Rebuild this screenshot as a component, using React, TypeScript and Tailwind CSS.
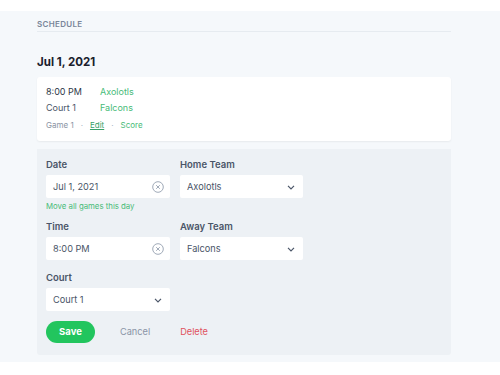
import React from "react";

function ClearIcon() {
  return (
    <svg width="12" height="12" viewBox="0 0 12 12" fill="none" stroke="#a0aab8" strokeWidth="1">
      <circle cx="6" cy="6" r="5.3" />
      <path d="M4.2 4.2l3.6 3.6M7.8 4.2l-3.6 3.6" />
    </svg>
  );
}

function Chevron() {
  return (
    <svg width="10" height="10" viewBox="0 0 10 10" fill="none" stroke="#4a5568" strokeWidth="1.2">
      <path d="M2 3.8l3 3 3-3" />
    </svg>
  );
}

function Field({ label, children }: { label: string; children: React.ReactNode }) {
  return (
    <div className="flex flex-col">
      <div className="text-[9.5px] font-semibold text-[#4a5568] leading-[12px] mb-[4px]">{label}</div>
      {children}
    </div>
  );
}

function TextBox({ value }: { value: string }) {
  return (
    <div className="w-[124px] h-[23px] bg-white rounded-[2px] flex items-center justify-between pl-[7px] pr-[6px] text-[9.2px] text-[#4a5568]">
      <span>{value}</span>
      <ClearIcon />
    </div>
  );
}

function SelectBox({ value, w = "w-[123px]" }: { value: string; w?: string }) {
  return (
    <div className={`${w} h-[23px] bg-white rounded-[2px] flex items-center justify-between pl-[7px] pr-[7px] text-[9.2px] text-[#4a5568]`}>
      <span>{value}</span>
      <Chevron />
    </div>
  );
}

export default function App() {
  return (
    <div className="w-[500px] h-[375px] bg-white font-['Inter',sans-serif] pt-[11px]">
      <div className="bg-[#f5f8fb] h-[351px] px-[37px] pt-[7px]">
        <div className="w-[414px]">
          <div className="text-[8px] font-semibold tracking-[0.04em] text-[#7a8699] uppercase leading-[12px] pb-[1px] border-b border-[#e6ebf0]">
            Schedule
          </div>
          <h2 className="text-[11.5px] font-bold text-[#1a202c] mt-[22px] leading-[16px]">Jul 1, 2021</h2>
          <div className="mt-[7px] bg-white rounded-[3px] shadow-[0_1px_2px_rgba(0,0,0,0.06)] px-[9px] pt-[7px] h-[64px]">
            <div className="grid grid-cols-[54px_1fr] text-[9px] leading-[16px]">
              <span className="text-[#2d3748]">8:00 PM</span>
              <span className="text-[#48bb78]">Axolotls</span>
              <span className="text-[#4a5568]">Court 1</span>
              <span className="text-[#48bb78]">Falcons</span>
            </div>
            <div className="flex items-center gap-[7px] mt-[3px] text-[8px] leading-[12px]">
              <span className="text-[#8a94a3]">Game 1</span>
              <span className="text-[#a0aec0]">·</span>
              <span className="text-[#38a169] underline">Edit</span>
              <span className="text-[#a0aec0]">·</span>
              <span className="text-[#48bb78]">Score</span>
            </div>
          </div>
          <div className="mt-[8px] bg-[#edf1f5] rounded-b-[3px] h-[206px] px-[9px] pt-[10px]">
            <div className="grid grid-cols-[124px_123px] gap-x-[10px]">
              <Field label="Date">
                <TextBox value="Jul 1, 2021" />
              </Field>
              <Field label="Home Team">
                <SelectBox value="Axolotls" />
              </Field>
            </div>
            <div className="text-[7.8px] text-[#48bb78] mt-[2px] leading-[12px]">Move all games this day</div>
            <div className="grid grid-cols-[124px_123px] gap-x-[10px] mt-[9px]">
              <Field label="Time">
                <TextBox value="8:00 PM" />
              </Field>
              <Field label="Away Team">
                <SelectBox value="Falcons" />
              </Field>
            </div>
            <div className="mt-[12px]">
              <Field label="Court">
                <SelectBox value="Court 1" w="w-[124px]" />
              </Field>
            </div>
            <div className="flex items-center mt-[10px]">
              <button className="w-[49px] h-[22px] rounded-full bg-[#22c55e] text-white text-[9.5px] font-bold">Save</button>
              <span className="ml-[25px] text-[9.2px] text-[#8a94a6]">Cancel</span>
              <span className="ml-[30px] text-[9.2px] text-[#e05260]">Delete</span>
            </div>
          </div>
        </div>
      </div>
    </div>
  );
}
